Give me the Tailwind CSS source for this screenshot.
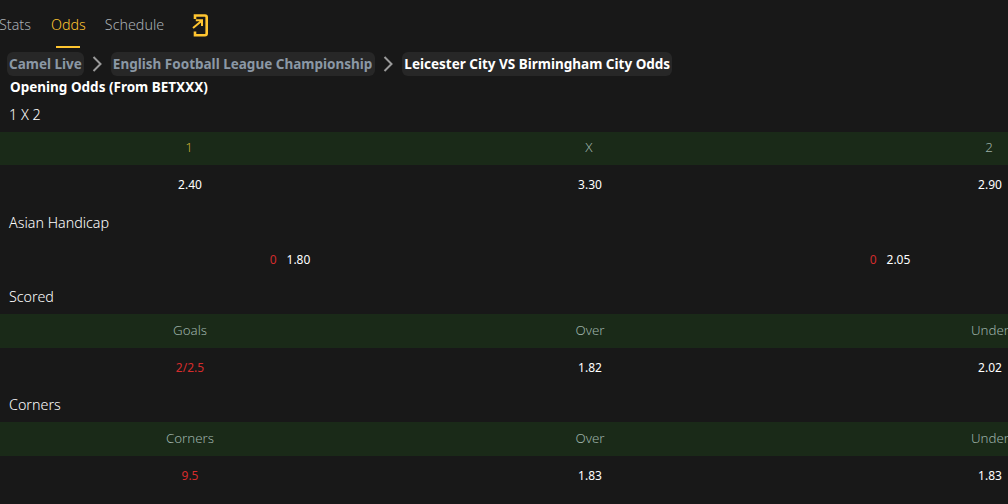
<!DOCTYPE html>
<html>
<head>
<meta charset="utf-8">
<script src="https://cdn.jsdelivr.net/npm/@tailwindcss/browser@4"></script>
</head>
<body class="bg-[#181818] font-['Noto_Sans',sans-serif] overflow-hidden">
<div class="w-[1008px] h-[504px] overflow-hidden">
  <div class="flex items-center h-[50px] ml-[-1px] text-[14.3px] font-light text-[#a8afb4]">
    <span class="w-[32px]">Stats</span>
    <div class="relative ml-[20px] text-[#ffc530]">Odds<span class="absolute left-[5px] top-[32px] w-[24px] h-[2px] bg-[#ffc530]"></span></div>
    <span class="ml-[19px]">Schedule</span>
    <svg class="ml-[28px] mt-[1px]" width="16" height="23" viewBox="0 0 16 23" fill="none" stroke="#ffc530" stroke-width="2.6"><path d="M3 5V1.500H13Q14.700 1.500 14.700 3.200V19.500Q14.700 21.200 13 21.200H3V17.500"/><path d="M1 14L9.500 7M3.800 6.300H10V12" stroke-width="2"/></svg>
  </div>
  <div class="flex items-center h-[24px] mt-[2px] ml-[7px] text-[13.5px] font-bold">
    <span class="bg-[#272727] rounded-md px-[2px] h-[24px] leading-[24px] text-[#8b98a5]">Camel Live</span>
    <svg class="ml-[7px] mr-[8px]" width="12" height="16" viewBox="0 0 12 16" fill="none" stroke="#9a9a9a" stroke-width="2"><path d="M2.500 1L9.500 8L2.500 15"/></svg>
    <span class="bg-[#272727] rounded-md pl-[2px] pr-[3px] h-[24px] leading-[24px] text-[#8b98a5]">English Football League Championship</span>
    <svg class="ml-[7px] mr-[8px]" width="12" height="16" viewBox="0 0 12 16" fill="none" stroke="#9a9a9a" stroke-width="2"><path d="M2.500 1L9.500 8L2.500 15"/></svg>
    <span class="bg-[#272727] rounded-md px-[2px] h-[24px] leading-[24px] text-white">Leicester City VS Birmingham City Odds</span>
  </div>
  <div class="ml-[10px] text-[13.5px] font-bold text-white h-[23px] leading-[23px]">Opening Odds (From BETXXX)</div>
  <div class="ml-[9px] text-[14.3px] font-light text-white h-[33px] leading-[32px]">1 X 2</div>
  <div class="ml-[-10px] w-[1200px] text-[12px]">
    <div class="grid grid-cols-3 h-[33px] pb-[1px] items-center text-center bg-[#1a2a18] text-[13.3px] font-light text-[#9db1a8]"><span class="pr-[2px] text-[#c2a935]">1</span><span class="pr-[2px]">X</span><span class="pr-[2px]">2</span></div>
    <div class="grid grid-cols-3 h-[40px] items-center text-center text-white"><span>2.40</span><span>3.30</span><span>2.90</span></div>
    <div class="ml-[19px] text-[14.3px] font-light text-white h-[35px] leading-[35px]">Asian Handicap</div>
    <div class="grid grid-cols-2 h-[39px] items-center text-center text-white"><span><span class="text-[#d42c2c] mr-[10px]">0</span>1.80</span><span><span class="text-[#d42c2c] mr-[10px]">0</span>2.05</span></div>
    <div class="ml-[19px] text-[14.3px] font-light text-white h-[35px] leading-[35px]">Scored</div>
    <div class="grid grid-cols-3 h-[34px] items-center text-center bg-[#1a2a18] text-[13.3px] font-light text-[#9db1a8]"><span>Goals</span><span>Over</span><span>Under</span></div>
    <div class="grid grid-cols-3 h-[39px] items-center text-center text-white"><span class="text-[#d42c2c]">2/2.5</span><span>1.82</span><span>2.02</span></div>
    <div class="ml-[19px] text-[14.3px] font-light text-white h-[35px] leading-[35px]">Corners</div>
    <div class="grid grid-cols-3 h-[34px] items-center text-center bg-[#1a2a18] text-[13.3px] font-light text-[#9db1a8]"><span>Corners</span><span>Over</span><span>Under</span></div>
    <div class="grid grid-cols-3 h-[40px] items-center text-center text-white"><span class="text-[#d42c2c]">9.5</span><span>1.83</span><span>1.83</span></div>
  </div>
</div>
</body>
</html>
